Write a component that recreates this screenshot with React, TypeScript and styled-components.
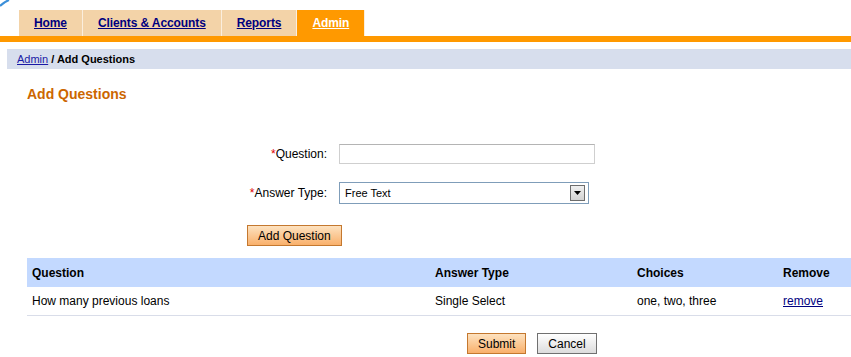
import React from 'react'
import styled, { createGlobalStyle } from 'styled-components'

const GlobalStyle = createGlobalStyle`
  body {
    margin: 0;
    background: #fff;
    font-family: "Liberation Sans", Arial, sans-serif;
    font-size: 12px;
    color: #000;
  }
`

const Page = styled.div`
  position: relative;
  width: 851px;
  height: 357px;
  overflow: hidden;
`

const Corner = styled.svg`
  position: absolute;
  left: 0;
  top: 0;
`

const TabBar = styled.div`
  display: flex;
  padding: 10px 0 0 19px;
  border-bottom: 6px solid #ff9900;
`

const Tab = styled.a<{ $active?: boolean }>`
  display: flex;
  align-items: center;
  height: 26px;
  padding: 0 15px;
  border-right: 1px solid #fbeedd;
  background: ${p => (p.$active ? '#ff9900' : '#f3d3a8')};
  color: ${p => (p.$active ? '#fff' : '#00007f')};
  font-weight: bold;
  font-size: 12px;
  letter-spacing: -0.1px;
  text-decoration: underline;
  cursor: pointer;
`

const Breadcrumb = styled.div`
  margin: 7px 0 0 7px;
  height: 20px;
  padding-left: 10px;
  display: flex;
  align-items: center;
  background: #d7deed;
  font-size: 11px;
  font-weight: bold;
  gap: 3px;
`

const CrumbLink = styled.a`
  color: #1a1aa6;
  font-weight: normal;
  text-decoration: underline;
`

const Title = styled.h2`
  margin: 17px 0 0 27px;
  font-size: 14px;
  line-height: 17px;
  color: #cc6600;
`

const Form = styled.div`
  margin-top: 41px;
  display: grid;
  grid-template-columns: 327px 260px;
  column-gap: 12px;
  row-gap: 18px;
  align-items: center;
`

const Label = styled.label`
  justify-self: end;
  font-size: 12px;
`

const Req = styled.span`
  color: #e00000;
`

const TextInput = styled.input`
  box-sizing: border-box;
  width: 256px;
  height: 20px;
  border: 1px solid #cfcfcf;
  border-top-color: #b4b4b4;
  font-family: inherit;
  font-size: 12px;
  outline: none;
`

const SelectWrap = styled.div`
  position: relative;
  width: 250px;
  height: 22px;
`

const Select = styled.select`
  box-sizing: border-box;
  width: 250px;
  height: 22px;
  border: 1px solid #7f9db9;
  background: #fff;
  appearance: none;
  padding: 0 0 0 5px;
  font-family: inherit;
  font-size: 11px;
  color: #000;
  outline: none;
`

const ArrowBox = styled.div`
  position: absolute;
  right: 4px;
  top: 3px;
  width: 15px;
  height: 16px;
  box-sizing: border-box;
  border: 1px solid #6d6d6d;
  background: linear-gradient(#f0f0f0, #d2d2d2);
  display: flex;
  align-items: center;
  justify-content: center;
  pointer-events: none;
`

const Button = styled.button<{ $primary?: boolean }>`
  height: 21px;
  padding: 0 10px;
  font-family: inherit;
  font-size: 12px;
  color: #000;
  border: 1px solid ${p => (p.$primary ? '#c4782f' : '#707070')};
  background: ${p =>
    p.$primary
      ? 'linear-gradient(#fde2c0, #f9b06b)'
      : 'linear-gradient(#ffffff, #dcdcdc)'};
  cursor: pointer;
`

const AddRow = styled.div`
  margin: 21px 0 0 247px;
  display: flex;
`

const Table = styled.table`
  margin: 12px 0 0 27px;
  width: 824px;
  border-collapse: collapse;
  font-size: 12px;
`

const Th = styled.th<{ $w: number }>`
  width: ${p => p.$w}px;
  height: 29px;
  padding: 0 0 0 5px;
  text-align: left;
  background: #c3d9ff;
  font-weight: bold;
`

const Td = styled.td`
  height: 28px;
  padding: 0 0 0 5px;
  border-bottom: 1px solid #d9dde9;
`

const RemoveLink = styled.a`
  color: #00007f;
  text-decoration: underline;
  cursor: pointer;
`

const Actions = styled.div`
  margin: 17px 0 0 467px;
  display: flex;
  gap: 11px;
`

export default function App() {
  return (
    <Page>
      <GlobalStyle />
      <Corner width="10" height="8" viewBox="0 0 10 8">
        <path d="M0 6 Q4 2 9 0" stroke="#3b8fd9" strokeWidth="2" fill="none" />
      </Corner>
      <TabBar>
        <Tab>Home</Tab>
        <Tab>Clients &amp; Accounts</Tab>
        <Tab>Reports</Tab>
        <Tab $active>Admin</Tab>
      </TabBar>
      <Breadcrumb>
        <CrumbLink>Admin</CrumbLink>
        <span>/ Add Questions</span>
      </Breadcrumb>
      <Title>Add Questions</Title>
      <Form>
        <Label>
          <Req>*</Req>Question:
        </Label>
        <TextInput type="text" />
        <Label>
          <Req>*</Req>Answer Type:
        </Label>
        <SelectWrap>
          <Select defaultValue="free">
            <option value="free">Free Text</option>
            <option value="single">Single Select</option>
            <option value="multi">Multi Select</option>
          </Select>
          <ArrowBox>
            <svg width="7" height="4" viewBox="0 0 7 4">
              <path d="M0 0 H7 L3.5 4 Z" fill="#000" />
            </svg>
          </ArrowBox>
        </SelectWrap>
      </Form>
      <AddRow>
        <Button $primary>Add Question</Button>
      </AddRow>
      <Table>
        <thead>
          <tr>
            <Th $w={398}>Question</Th>
            <Th $w={197}>Answer Type</Th>
            <Th $w={141}>Choices</Th>
            <Th $w={68}>Remove</Th>
          </tr>
        </thead>
        <tbody>
          <tr>
            <Td>How many previous loans</Td>
            <Td>Single Select</Td>
            <Td>one, two, three</Td>
            <Td>
              <RemoveLink>remove</RemoveLink>
            </Td>
          </tr>
        </tbody>
      </Table>
      <Actions>
        <Button $primary>Submit</Button>
        <Button>Cancel</Button>
      </Actions>
    </Page>
  )
}
